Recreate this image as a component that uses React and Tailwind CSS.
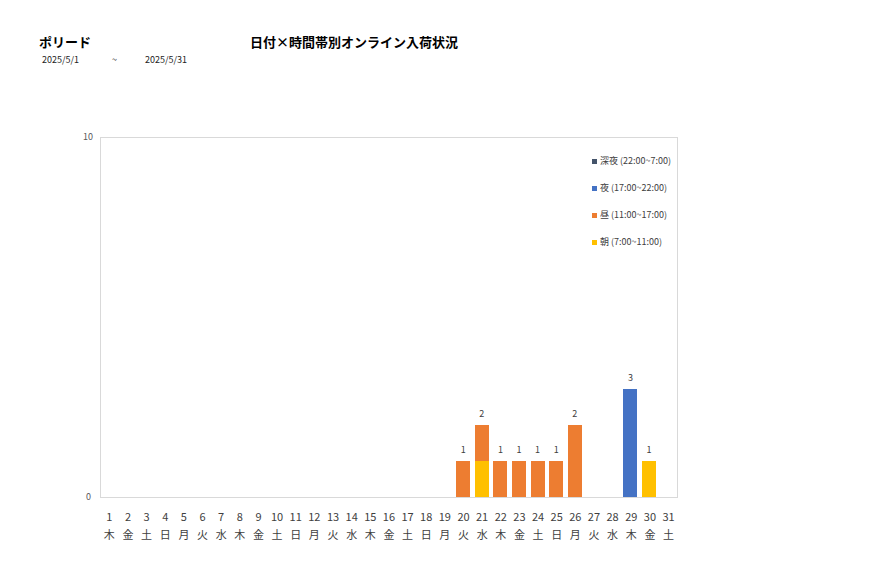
const WD = ['木', '金', '土', '日', '月', '火', '水'];
const DATA = {
  20: { hiru: 1 },
  21: { asa: 1, hiru: 1 },
  22: { hiru: 1 },
  23: { hiru: 1 },
  24: { hiru: 1 },
  25: { hiru: 1 },
  26: { hiru: 2 },
  29: { yoru: 3 },
  30: { asa: 1 },
};
const U = 36;

const LEGEND = [
  { c: 'bg-[#44546a]', t: '深夜 (22:00~7:00)' },
  { c: 'bg-[#4472c4]', t: '夜 (17:00~22:00)' },
  { c: 'bg-[#ed7d31]', t: '昼 (11:00~17:00)' },
  { c: 'bg-[#ffc000]', t: '朝 (7:00~11:00)' },
];

export default function App() {
  const days = Array.from({ length: 31 }, (_, i) => i + 1);
  return (
    <div className="w-[877px] h-[578px] bg-white relative" style={{ fontFamily: '"Noto Sans CJK JP", "Noto Sans", sans-serif' }}>
      <div className="flex pt-[31px] pl-[39px]">
        <div className="w-[211px]">
          <div className="text-[13px] font-bold text-black leading-[22px]">ポリード</div>
          <div className="flex text-[9px] text-[#222] leading-[14px] pl-[3px]">
            <span className="w-[70px]">2025/5/1</span>
            <span className="w-[33px]">~</span>
            <span>2025/5/31</span>
          </div>
        </div>
        <div className="text-[13px] font-bold text-black leading-[22px]">日付×時間帯別オンライン入荷状況</div>
      </div>

      <div className="absolute left-[80px] top-[132px] flex">
        <div className="w-[20px] h-[370px] flex flex-col justify-between text-[9px] text-[#595959] leading-[10px]">
          <span className="pl-[3px]">10</span>
          <span className="pl-[6px]">0</span>
        </div>
      </div>

      <div className="absolute left-[100px] top-[137px] w-[578px] h-[361px] border border-[#d9d9d9] flex items-end">
        {days.map((d) => {
          const v = DATA[d] || {};
          const total = (v.asa || 0) + (v.hiru || 0) + (v.yoru || 0);
          return (
            <div key={d} className="flex-1 flex flex-col items-center justify-end">
              {total > 0 && <div className="text-[9px] text-[#404040] leading-[12px] mb-[5px]">{total}</div>}
              {v.yoru && <div className="w-[14px] bg-[#4472c4]" style={{ height: v.yoru * U }} />}
              {v.hiru && <div className="w-[14px] bg-[#ed7d31]" style={{ height: v.hiru * U }} />}
              {v.asa && <div className="w-[14px] bg-[#ffc000]" style={{ height: v.asa * U }} />}
            </div>
          );
        })}
        <div className="absolute left-[491px] top-[15px] flex flex-col gap-[11px]">
          {LEGEND.map((l) => (
            <div key={l.t} className="flex items-center gap-[3px] text-[9px] text-[#404040] leading-[16px]">
              <span className={`w-[5px] h-[5px] ${l.c}`} />
              {l.t}
            </div>
          ))}
        </div>
      </div>

      <div className="absolute left-[100px] top-[507px] w-[578px] flex">
        {days.map((d, i) => (
          <div key={d} className="flex-1 flex flex-col items-center text-[11px] text-[#404040] leading-[18px]">
            <span>{d}</span>
            <span>{WD[i % 7]}</span>
          </div>
        ))}
      </div>
    </div>
  );
}
